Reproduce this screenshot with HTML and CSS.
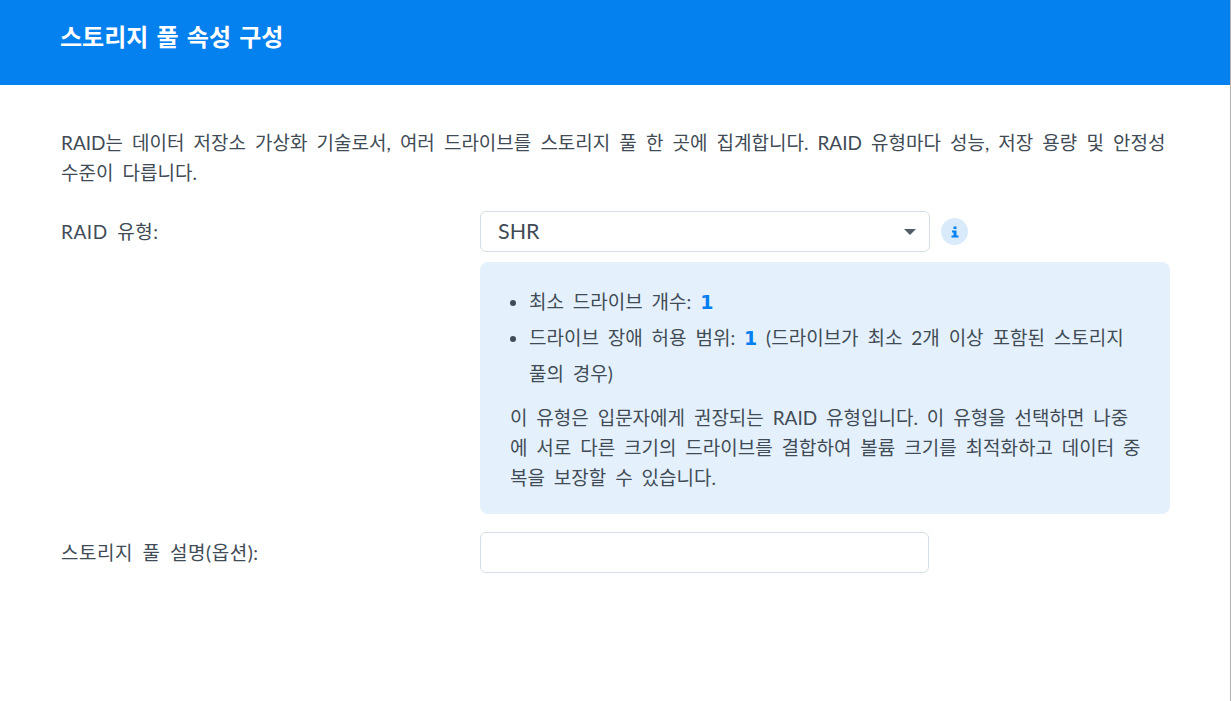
FILE: index.html
```html
<!DOCTYPE html>
<html lang="ko">
<head>
<meta charset="utf-8">
<title>스토리지 풀 속성 구성</title>
<link rel="stylesheet" href="styles.css">
</head>
<body>
<div class="page">
  <header class="header"><h1 class="title">스토리지 풀 속성 구성</h1></header>
  <main class="content">
    <p class="intro">RAID는 데이터 저장소 가상화 기술로서, 여러 드라이브를 스토리지 풀 한 곳에 집계합니다. RAID 유형마다 성능, 저장 용량 및 안정성 수준이 다릅니다.</p>
    <div class="row row-raid">
      <label class="label">RAID 유형:</label>
      <div class="field">
        <div class="select-line">
          <div class="select"><span>SHR</span><span class="caret"></span></div>
          <span class="info"><svg width="8" height="12" viewBox="0 0 8 12"><path d="M2.5 0.5h3v2.5h-3zM1 4.5h4.5v5H7.5v2H0.5v-2h2v-3H1z" fill="#0580ef"/></svg></span>
        </div>
        <div class="note">
          <ul class="facts">
            <li>최소 드라이브 개수: <b class="num">1</b></li>
            <li>드라이브 장애 허용 범위: <b class="num">1</b> (드라이브가 최소 2개 이상 포함된 스토리지 풀의 경우)</li>
          </ul>
          <p class="note-text">이 유형은 입문자에게 권장되는 RAID 유형입니다. 이 유형을 선택하면 나중에 서로 다른 크기의 드라이브를 결합하여 볼륨 크기를 최적화하고 데이터 중복을 보장할 수 있습니다.</p>
        </div>
      </div>
    </div>
    <div class="row row-desc">
      <label class="label">스토리지 풀 설명(옵션):</label>
      <div class="field"><div class="input"></div></div>
    </div>
  </main>
</div>
</body>
</html>
```

FILE: styles.css
```css
* { box-sizing: border-box; }
html, body { margin: 0; height: 100%; overflow: hidden; background: #fff; }
body { font-family: Lato, "Noto Sans CJK KR", sans-serif; color: #414b55; font-size: 19px; word-spacing: 4px; }
.page { height: 701px; border-right: 1px solid #b3b3b3; }
.header { height: 85px; background: #0580ef; padding: 20px 60px 0; }
.title { margin: 0; font-size: 24px; line-height: 34px; font-weight: 700; color: #fff; word-spacing: 2.4px; }
.content { padding: 43px 60px 0 61px; }
.intro { margin: 0 0 23px; line-height: 30px; word-spacing: 4.2px; }
.row { display: flex; }
.label { width: 419px; flex: none; line-height: 42px; letter-spacing: 0.55px; }
.field { width: 690px; }
.select-line { display: flex; align-items: center; gap: 11px; }
.select { width: 450px; height: 41px; border: 1px solid #d6dfe8; border-radius: 6px; padding: 0 13px 2px 17px; display: flex; align-items: center; justify-content: space-between; font-size: 21.5px; }
.caret { width: 0; height: 0; margin-top: 2px; border-left: 6.5px solid transparent; border-right: 6.5px solid transparent; border-top: 6px solid #535c66; }
.info { width: 27px; height: 27px; border-radius: 50%; background: #d9eafb; display: flex; align-items: center; justify-content: center; }
.note { margin-top: 10px; height: 252px; background: #e4f1fd; border-radius: 8px; padding: 22px 28px 0 29px; line-height: 36px; }
.facts { margin: 0; padding: 0 0 0 20px; list-style: disc; }
.num { color: #0580ef; font-family: "DejaVu Sans", sans-serif; font-weight: 700; font-size: 19px; }
.note-text { margin: 0; line-height: 30px; padding: 11px 0 0 1px; }
.row-desc { margin-top: 18px; }
.input { width: 449px; height: 41px; border: 1px solid #d6dfe8; border-radius: 6px; }
```
